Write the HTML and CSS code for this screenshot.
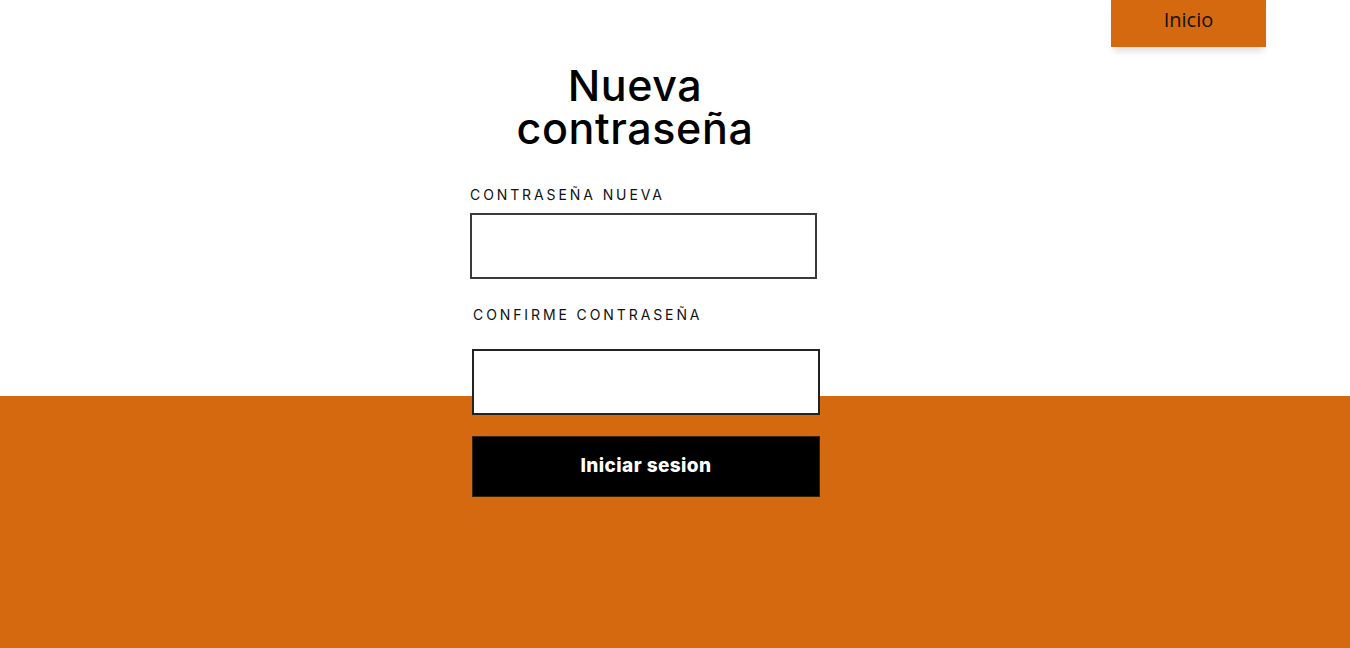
FILE: index.html
```html
<!DOCTYPE html>
<html lang="es">
<head>
<meta charset="utf-8">
<title>Nueva contraseña</title>
<link rel="stylesheet" href="styles.css">
</head>
<body>
<header class="topbar">
  <a class="home-btn" href="#">Inicio</a>
</header>
<main class="page">
  <form class="card">
    <h1 class="title">Nueva<br>contraseña</h1>
    <label class="label">CONTRASEÑA NUEVA</label>
    <input class="field" type="password">
    <label class="label label-2">CONFIRME CONTRASEÑA</label>
    <input class="field field-2" type="password">
    <button class="submit" type="button">Iniciar sesion</button>
  </form>
</main>
</body>
</html>
```
FILE: styles.css
```css
html, body {
  margin: 0;
  padding: 0;
}
body {
  width: 1350px;
  height: 648px;
  overflow: hidden;
  background: linear-gradient(to bottom, #ffffff 0, #ffffff 396px, #d4690f 396px, #d4690f 100%);
  font-family: Inter, "Noto Sans", "Liberation Sans", sans-serif;
}
.topbar {
  display: flex;
  justify-content: flex-end;
  padding-right: 84px;
  height: 47px;
}
.home-btn {
  display: flex;
  align-items: center;
  justify-content: center;
  width: 155px;
  height: 47px;
  padding-bottom: 8px;
  box-sizing: border-box;
  background: #d4690f;
  color: #111;
  font-family: "Open Sans", sans-serif;
  font-size: 20px;
  text-decoration: none;
  box-shadow: 0 7px 7px -3px rgba(0,0,0,0.14);
}
.page {
  padding-left: 470px;
}
.card {
  display: flex;
  flex-direction: column;
  width: 350px;
}
.title {
  width: 330px;
  margin: 17px 0 0 0;
  text-align: center;
  font-size: 43px;
  font-weight: 500;
  line-height: 43px;
  color: #000;
  letter-spacing: 0.6px;
}
.label {
  margin-top: 36px;
  font-size: 14px;
  letter-spacing: 2.9px;
  color: #111;
  line-height: 18px;
}
.label-2 {
  margin-top: 27px;
  margin-left: 3px;
}
.field {
  margin-top: 9px;
  width: 347px;
  height: 66px;
  box-sizing: border-box;
  border: 2px solid #3a3a3a;
  background: #fff;
  outline: none;
}
.field-2 {
  margin-top: 25px;
  margin-left: 2px;
  width: 348px;
  border-color: #222;
}
.submit {
  margin-top: 21px;
  margin-left: 2px;
  width: 348px;
  height: 61px;
  padding-bottom: 4px;
  border: 1px solid #3a2200;
  background: #000;
  color: #fff;
  font-family: Inter, "Noto Sans", sans-serif;
  font-size: 19px;
  font-weight: 800;
  letter-spacing: 0.4px;
  cursor: pointer;
}
```
